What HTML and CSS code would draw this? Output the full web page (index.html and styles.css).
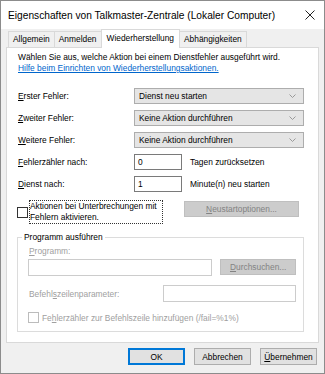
FILE: index.html
```html
<!DOCTYPE html>
<html lang="de">
<head>
    <meta charset="UTF-8">
    <meta name="viewport" content="width=device-width, initial-scale=1.0">
    <title>Eigenschaften von Talkmaster-Zentrale</title>
    <link rel="stylesheet" href="styles.css">
</head>
<body>

<div class="window">
    <div class="titlebar">
        <span class="title">Eigenschaften von Talkmaster-Zentrale (Lokaler Computer)</span>
        <svg class="close" width="10" height="10" viewBox="0 0 10 10">
            <path d="M0.5 0.5L9.5 9.5M9.5 0.5L0.5 9.5" stroke="#222" stroke-width="1" fill="none"/>
        </svg>
    </div>

    <div class="tabs">
        <div class="tab">Allgemein</div>
        <div class="tab">Anmelden</div>
        <div class="tab active">Wiederherstellung</div>
        <div class="tab">Abhängigkeiten</div>
    </div>

    <div class="panel">
        <p class="intro">
            Wählen Sie aus, welche Aktion bei einem Dienstfehler ausgeführt wird.<br>
            <a href="#">Hilfe beim Einrichten von Wiederherstellungsaktionen.</a>
        </p>

        <div class="form">
            <label><u>E</u>rster Fehler:</label>
            <div class="select">
                <span>Dienst neu starten</span>
                <svg width="7" height="4" viewBox="0 0 7 4"><path d="M0.5 0.5L3.5 3.5L6.5 0.5" stroke="#999" fill="none"/></svg>
            </div>

            <label><u>Z</u>weiter Fehler:</label>
            <div class="select">
                <span>Keine Aktion durchführen</span>
                <svg width="7" height="4" viewBox="0 0 7 4"><path d="M0.5 0.5L3.5 3.5L6.5 0.5" stroke="#999" fill="none"/></svg>
            </div>

            <label><u>W</u>eitere Fehler:</label>
            <div class="select">
                <span>Keine Aktion durchführen</span>
                <svg width="7" height="4" viewBox="0 0 7 4"><path d="M0.5 0.5L3.5 3.5L6.5 0.5" stroke="#999" fill="none"/></svg>
            </div>

            <label><u>F</u>ehlerzähler nach:</label>
            <div class="inline">
                <div class="textbox small">0</div>
                <span>Tagen zurücksetzen</span>
            </div>

            <label><u>D</u>ienst nach:</label>
            <div class="inline">
                <div class="textbox small">1</div>
                <span>Minute(n) neu starten</span>
            </div>
        </div>

        <div class="check-row">
            <span class="checkbox"></span>
            <span class="focus-label">Aktionen bei Unterbrechungen mit<br>Fehlern aktivieren.</span>
            <button class="btn disabled restart"><u>N</u>eustartoptionen...</button>
        </div>

        <fieldset class="group">
            <legend>Programm ausführen</legend>
            <div class="muted prog-label"><u>P</u>rogramm:</div>
            <div class="prog-row">
                <div class="textbox disabled-box prog"></div>
                <button class="btn disabled browse"><u>D</u>urchsuchen...</button>
            </div>
            <div class="param-row">
                <span class="muted">Befehl<u>s</u>zeilenparameter:</span>
                <div class="textbox disabled-box param"></div>
            </div>
            <div class="fail-row">
                <span class="checkbox off"></span>
                <span class="muted">Fe<u>h</u>lerzähler zur Befehlszeile hinzufügen (/fail=%1%)</span>
            </div>
        </fieldset>
    </div>

    <div class="buttons">
        <button class="btn default">OK</button>
        <button class="btn">Abbrechen</button>
        <button class="btn"><u>Ü</u>bernehmen</button>
    </div>
</div>

</body>
</html>
```

FILE: styles.css
```css
body {
    margin: 0;
    font-family: "Liberation Sans", Arial, sans-serif;
    font-size: 8.4px;
    color: #000;
}
u {
    text-decoration-thickness: 1px;
    text-underline-offset: 1px;
}
.window {
    width: 325px;
    height: 374px;
    box-sizing: border-box;
    border: 1px solid #8c8c8c;
    background-color: #f0f0f0;
    display: flex;
    flex-direction: column;
}
.titlebar {
    height: 28px;
    background-color: #fff;
    display: flex;
    align-items: center;
    justify-content: space-between;
    padding: 0 9px 0 7px;
}
.title {
    font-size: 10.2px;
}
.tabs {
    display: flex;
    align-items: flex-end;
    height: 18px;
    margin-left: 7px;
}
.tab {
    height: 15px;
    line-height: 15px;
    padding: 0 4px;
    border: 1px solid #d9d9d9;
    border-bottom: none;
    margin-right: -1px;
    background-color: #f0f0f0;
}
.tab.active {
    height: 18px;
    line-height: 17px;
    background-color: #fff;
    margin-bottom: -1px;
    position: relative;
    z-index: 1;
    padding: 0 5px;
}
.panel {
    margin: 0 5px;
    height: 296px;
    box-sizing: border-box;
    background-color: #fff;
    border: 1px solid #d9d9d9;
    padding: 4px 0 0 11px;
}
.intro {
    margin: 0;
    line-height: 11px;
}
.intro a {
    color: #0066cc;
}
.form {
    display: grid;
    grid-template-columns: 116px 170px;
    row-gap: 6px;
    margin-top: 14px;
    align-items: center;
}
.select {
    height: 16px;
    box-sizing: border-box;
    border: 1px solid #adadad;
    background-color: #e5e5e5;
    display: flex;
    align-items: center;
    justify-content: space-between;
    padding: 0 7px 0 4px;
}
.inline {
    display: flex;
    align-items: center;
    gap: 8px;
}
.textbox {
    height: 16px;
    box-sizing: border-box;
    border: 1px solid #7a7a7a;
    background-color: #fff;
    padding: 0 3px;
    line-height: 14px;
}
.textbox.small {
    width: 48px;
}
.check-row {
    display: flex;
    align-items: flex-start;
    margin-top: 8px;
}
.checkbox {
    width: 11px;
    height: 11px;
    box-sizing: border-box;
    border: 1px solid #333;
    background-color: #fff;
    margin: 7px 1px 0 -1px;
    flex-shrink: 0;
}
.checkbox.off {
    border-color: #bcbcbc;
    margin: 0 3px 0 0;
}
.focus-label {
    width: 134px;
    box-sizing: border-box;
    border: 1px dotted #333;
    line-height: 11px;
}
.btn {
    font-family: inherit;
    font-size: 8.4px;
    height: 17px;
    box-sizing: border-box;
    border: 1px solid #adadad;
    background-color: #e1e1e1;
    color: #000;
    padding: 0;
}
.btn.disabled {
    background-color: #cccccc;
    border-color: #bfbfbf;
    color: #838383;
}
.restart {
    width: 115px;
    margin-left: 21px;
    margin-top: 1px;
    height: 16px;
}
.group {
    margin: 8px 0 0 -1px;
    width: 287px;
    box-sizing: border-box;
    border: 1px solid #dcdcdc;
    padding: 3px 7px 8px 10px;
    min-width: 0;
}
.group legend {
    padding: 0 2px;
    margin-left: -6px;
    line-height: 11px;
}
.muted {
    color: #a0a0a0;
}
.prog-label {
    line-height: 11px;
    margin-left: 1px;
}
.prog-row {
    display: flex;
    gap: 8px;
    margin-top: 2px;
}
.disabled-box {
    border-color: #cccccc;
    height: 17px;
}
.prog {
    width: 185px;
}
.browse {
    width: 76px;
    height: 16px;
}
.param-row {
    display: flex;
    align-items: center;
    justify-content: space-between;
    margin-top: 9px;
    padding-left: 1px;
}
.param {
    width: 133px;
}
.fail-row {
    display: flex;
    align-items: center;
    margin-top: 10px;
}
.buttons {
    display: flex;
    justify-content: flex-end;
    gap: 9px;
    padding: 5px 7px 0 0;
}
.buttons .btn {
    width: 57px;
}
.btn.default {
    border-color: #0078d7;
    box-shadow: inset 0 0 0 1px #0078d7;
}
```
